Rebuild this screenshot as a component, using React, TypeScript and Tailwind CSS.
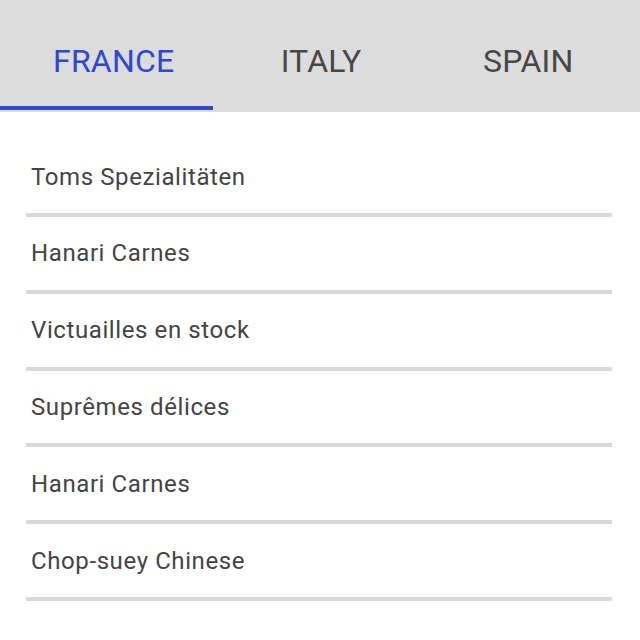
import React from "react";

const tabs = ["FRANCE", "ITALY", "SPAIN"];
const items = [
  "Toms Spezialitäten",
  "Hanari Carnes",
  "Victuailles en stock",
  "Suprêmes délices",
  "Hanari Carnes",
  "Chop-suey Chinese",
];

export default function App() {
  return (
    <div className="w-[640px] h-[640px] bg-white" style={{ fontFamily: "Roboto, sans-serif" }}>
      <div className="relative flex h-[112px] bg-[#dcdcdc] pl-[10px] pr-[8px]">
        {tabs.map((t, i) => (
          <div key={t} className="flex-1 flex items-center justify-center pt-[10px]">
            <span
              className={`text-[32px] leading-none tracking-[0.2px] ${i === 0 ? "text-[#2f48d2]" : "text-[#474747]"}`}
            >
              {t}
            </span>
          </div>
        ))}
        <div className="absolute left-0 w-[213px] bottom-[2px] h-[4px] bg-[#2f48d2]" />
      </div>
      <div className="pt-[28.2px] pl-[26px] pr-[28px]">
        {items.map((it, i) => (
          <div
            key={i}
            className="h-[76.8px] border-b-4 border-[#d9d9d9] flex items-center pl-[5px] text-[24px] tracking-[0.6px] text-[#444444]"
          >
            {it}
          </div>
        ))}
      </div>
    </div>
  );
}
